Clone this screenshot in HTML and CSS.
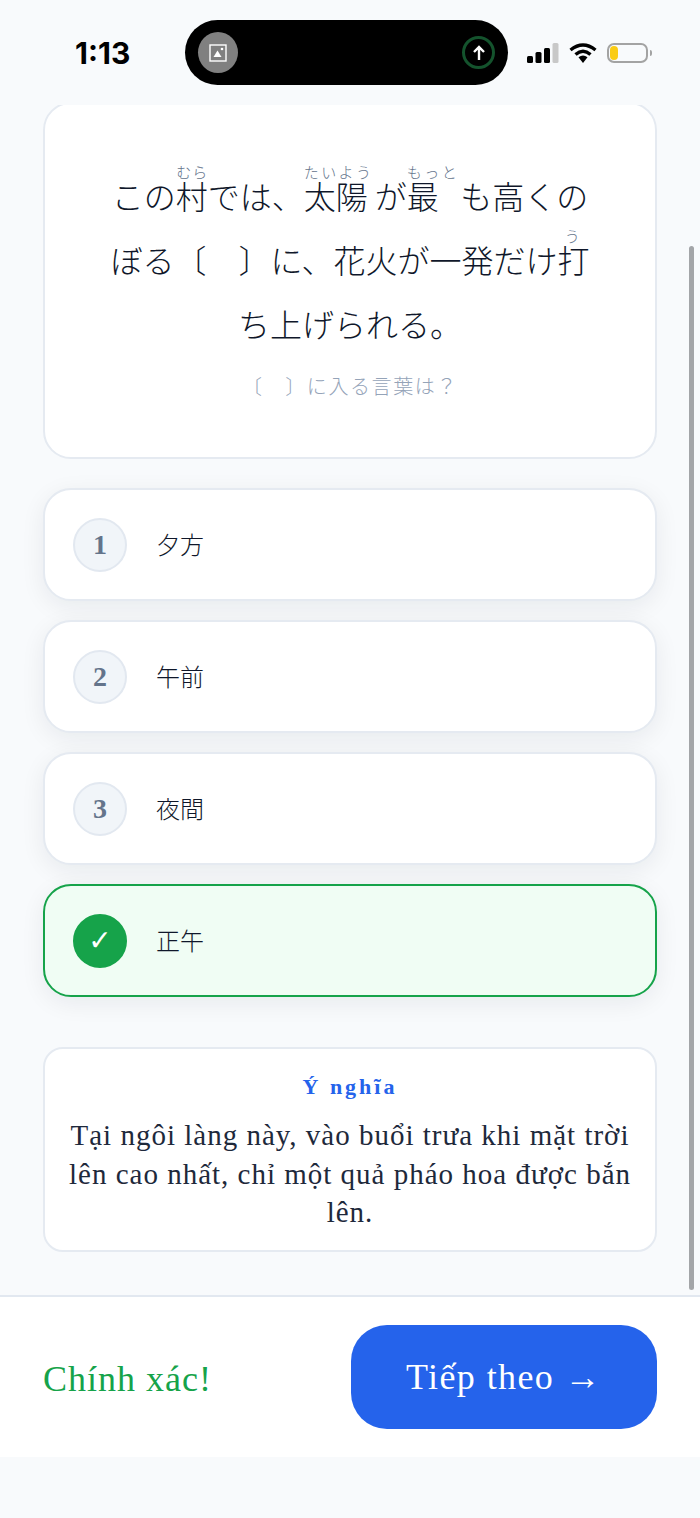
FILE: index.html
```html
<!DOCTYPE html>
<html lang="ja">
    <head>
        <meta charset="utf-8">
        <title>Quiz</title>
        <link rel="stylesheet" href="styles.css">
    </head>

    <body>
        <div class="statusbar">
            <span class="time">1:13</span>
            <div class="island">
                <div class="island-thumb">
                    <svg width="18" height="18" viewBox="0 0 18 18">
                        <rect x="1" y="1" width="16" height="16" fill="none" stroke="#fff" stroke-width="1.4"/>
                        <path d="M4.5 13 L8.5 6.5 L12.5 13 Z" fill="#fff"/>
                        <circle cx="13" cy="5" r="1.3" fill="#fff"/>
                    </svg>
                </div>
                <div class="island-upload">
                    <svg width="16" height="18" viewBox="0 0 16 18">
                        <path d="M8 16 V3 M3 8 L8 3 L13 8" fill="none" stroke="#fff" stroke-width="2.4"/>
                    </svg>
                </div>
            </div>
            <div class="status-icons">
                <svg width="32" height="20" viewBox="0 0 32 20">
                    <rect x="0" y="13" width="6" height="7" rx="1.5" fill="#000"/>
                    <rect x="8.5" y="9" width="6" height="11" rx="1.5" fill="#000"/>
                    <rect x="17" y="5" width="6" height="15" rx="1.5" fill="#000"/>
                    <rect x="25.5" y="0" width="6" height="20" rx="1.5" fill="#c8c8c8"/>
                </svg>
                <svg width="28" height="20" viewBox="0 0 28 20">
                    <path d="M1.5 7 Q14 -3 26.5 7" fill="none" stroke="#000" stroke-width="3.4"/>
                    <path d="M6.5 11.5 Q14 5 21.5 11.5" fill="none" stroke="#000" stroke-width="3.4"/>
                    <path d="M9.5 14.2 Q14 10.8 18.5 14.2 L14 20 Z" fill="#000"/>
                </svg>
                <div class="battery">
                    <div class="battery-fill"></div>
                </div>
            </div>
        </div>

        <div class="scroller">
            <div class="scrollbar"></div>
            <div class="content">
                <div class="question">
                    <p class="sentence">この<ruby class="mura">村<rt>むら</rt></ruby>では、<ruby class="taiyou">太陽<rt>たいよう</rt></ruby>が<ruby class="motto">最<rt>もっと</rt></ruby>も高くのぼる〔　〕に、花火が一発だけ<ruby>打<rt>う</rt></ruby>ち上げられる。</p>
                    <p class="hint">〔　〕に入る言葉は？</p>
                </div>

                <div class="options">
                    <div class="option">
                        <span class="num">1</span>
                        <span class="label">夕方</span>
                    </div>
                    <div class="option">
                        <span class="num">2</span>
                        <span class="label">午前</span>
                    </div>
                    <div class="option">
                        <span class="num">3</span>
                        <span class="label">夜間</span>
                    </div>
                    <div class="option correct">
                        <span class="num">✓</span>
                        <span class="label">正午</span>
                    </div>
                </div>

                <div class="meaning">
                    <h2 lang="vi">Ý nghĩa</h2>
                    <p lang="vi">Tại ngôi làng này, vào buổi trưa khi mặt trời lên cao nhất, chỉ một quả pháo hoa được bắn lên.</p>
                </div>
            </div>
        </div>

        <div class="footer" lang="vi">
            <span class="result">Chính xác!</span>
            <button class="next">Tiếp theo →</button>
        </div>
    </body>
</html>
```

FILE: styles.css
```css
* {
    box-sizing: border-box;
}

body {
    margin: 0;
    height: 1518px;
    overflow: hidden;
    background-color: #f8fafc;
    font-family: "Liberation Serif", "Noto Sans CJK JP", serif;
    color: #1e293b;
}

.statusbar {
    height: 105px;
    display: flex;
    align-items: center;
    padding-left: 75px;
}

.time {
    width: 110px;
    font-family: "Inter", "Liberation Sans", sans-serif;
    font-size: 30px;
    font-weight: 700;
    color: #000;
}

.island {
    width: 323px;
    height: 65px;
    border-radius: 33px;
    background-color: #000;
    display: flex;
    align-items: center;
    justify-content: space-between;
    padding: 0 13px;
}

.island-thumb {
    width: 40px;
    height: 41px;
    border-radius: 50%;
    background-color: #808080;
    display: flex;
    align-items: center;
    justify-content: center;
}

.island-upload {
    width: 33px;
    height: 33px;
    border-radius: 50%;
    border: 3px solid #14532d;
    display: flex;
    align-items: center;
    justify-content: center;
}

.status-icons {
    display: flex;
    align-items: center;
    gap: 10px;
    margin-left: 19px;
}

.battery {
    position: relative;
    width: 41px;
    height: 20px;
    border: 2px solid #a3a3a3;
    border-radius: 7px;
    padding: 1px;
}

.battery::after {
    content: "";
    position: absolute;
    right: -6px;
    top: 5px;
    width: 2px;
    height: 6px;
    border-radius: 0 2px 2px 0;
    background-color: #a3a3a3;
}

.battery-fill {
    width: 8px;
    height: 100%;
    border-radius: 4px;
    background-color: #facc15;
}

.scroller {
    position: relative;
    height: 1190px;
    overflow: hidden;
}

.scrollbar {
    position: absolute;
    top: 141px;
    right: 6px;
    width: 5px;
    height: 1044px;
    border-radius: 3px;
    background-color: #a3a5a8;
}

.content {
    padding: 0 43px;
    margin-top: -3px;
}

.question {
    height: 357px;
    padding: 61px 60px 0;
    background-color: #fff;
    border: 2px solid #e5eaf1;
    border-radius: 28px;
    text-align: center;
}

.sentence {
    margin: 0;
    font-size: 32px;
    font-weight: 300;
    line-height: 64px;
    color: #0f172a;
}

rt {
    font-size: 15px;
    line-height: 28px;
    letter-spacing: 2.5px;
    color: #64748b;
}

.mura rt {
    letter-spacing: 0;
}

.taiyou,
.motto {
    ruby-align: start;
}

.taiyou {
    margin-right: 7px;
}

.motto {
    margin-right: 8px;
}

.hint {
    margin: 15px 0 0;
    font-size: 20px;
    font-weight: 300;
    line-height: 28px;
    letter-spacing: 1.6px;
    color: #94a3b8;
}

.options {
    display: flex;
    flex-direction: column;
    gap: 19px;
    margin-top: 29px;
}

.option {
    height: 113px;
    padding: 0 28px;
    display: flex;
    align-items: center;
    gap: 29px;
    background-color: #fff;
    border: 2px solid #e5eaf1;
    border-radius: 28px;
    box-shadow: 0 6px 24px rgba(15, 23, 42, .07);
}

.num {
    width: 54px;
    height: 54px;
    flex-shrink: 0;
    display: flex;
    align-items: center;
    justify-content: center;
    border-radius: 50%;
    border: 2px solid #e2e8f0;
    background-color: #f1f5f9;
    font-size: 28px;
    font-weight: 700;
    color: #64748b;
}

.label {
    font-size: 24px;
    font-weight: 300;
    margin-top: -2px;
    color: #0f172a;
}

.correct {
    background-color: #f0fdf4;
    border-color: #16a34a;
}

.correct .num {
    background-color: #16a34a;
    border-color: #16a34a;
    color: #fff;
    font-family: "DejaVu Sans", sans-serif;
}

.meaning {
    margin-top: 50px;
    height: 205px;
    padding: 24px 18px 0;
    background-color: #fff;
    border: 2px solid #e5eaf1;
    border-radius: 20px;
    text-align: center;
}

.meaning h2 {
    margin: 0;
    font-size: 22px;
    line-height: 28px;
    letter-spacing: 3px;
    color: #2563eb;
}

.meaning p {
    margin: 15px 0 0;
    font-size: 29px;
    line-height: 38.5px;
    letter-spacing: 1px;
}

.footer {
    height: 162px;
    padding: 0 43px;
    display: flex;
    align-items: center;
    justify-content: space-between;
    background-color: #fff;
    border-top: 2px solid #e2e8f0;
}

.result {
    margin-top: 3px;
    font-size: 36px;
    letter-spacing: 1px;
    color: #16a34a;
}

.next {
    width: 306px;
    height: 104px;
    border: 0;
    border-radius: 36px;
    background-color: #2563eb;
    color: #fff;
    font-family: inherit;
    font-size: 36px;
    letter-spacing: 1.4px;
}
```
